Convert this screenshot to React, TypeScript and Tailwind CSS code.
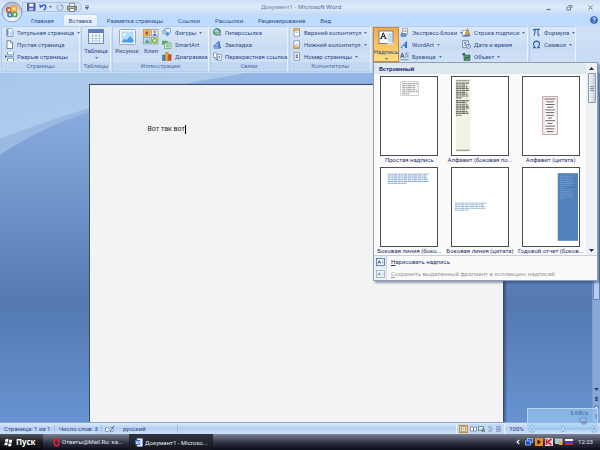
import type { ReactNode } from "react";

const pageText = "font-['Roboto','Noto_Sans',sans-serif] text-[6px] leading-[8px] whitespace-nowrap";

function Svg({ w = 9, h = 9, box, children }: { w?: number; h?: number; box?: string; children: ReactNode }) {
  return (
    <svg width={w} height={h} viewBox={box ?? `0 0 ${w} ${h}`} className="block shrink-0" aria-hidden="true">
      {children}
    </svg>
  );
}

function Caret() {
  return (
    <Svg w={3} h={2}>
      <path d="M0 0h3L1.500 2z" fill="#5a7098" />
    </Svg>
  );
}

/* ---------- ribbon icons ---------- */

const CoverPage = () => (
  <Svg>
    <path d="M2 .5h4l2 2v6H2z" fill="#fff" stroke="#5f82b4" strokeWidth=".7" />
    <path d="M1.500 1.500h2v6h-2z" fill="#5c93cf" />
    <path d="M4.500 4h2.500M4.500 5.500h2.500M4.500 7h2.500" stroke="#6aa3c8" strokeWidth=".6" />
  </Svg>
);
const BlankPage = () => (
  <Svg>
    <path d="M2 .7h3.500l2 2v5.800H2z" fill="#fff" stroke="#5b6d92" strokeWidth=".8" />
    <path d="M5.500.7v2h2" fill="#cfdcf0" stroke="#5b6d92" strokeWidth=".6" />
  </Svg>
);
const PageBreak = () => (
  <Svg>
    <path d="M2.500 0v2.800h6V0M2.500 9V6.200h6V9" fill="#fff" stroke="#667ba3" strokeWidth=".8" />
    <path d="M2.500 4.500h6.500" stroke="#42587f" strokeWidth=".8" strokeDasharray="1 .6" />
    <path d="M0 3l2 1.500L0 6z" fill="#2e4f86" />
  </Svg>
);
const Shapes = () => (
  <Svg w={10}>
    <rect x="2.500" y=".5" width="6" height="4.500" rx="1" fill="#e8f2fc" stroke="#5989c0" strokeWidth=".8" />
    <circle cx="2.500" cy="4" r="2" fill="#bcd8f2" stroke="#5989c0" strokeWidth=".7" />
    <path d="M5.500 4l2 2-2 2.500-2-2.500z" fill="#4f8dcc" />
  </Svg>
);
const SmartArt = () => (
  <Svg w={10}>
    <path d="M0 .8h5l1.500 2L5 4.800H0z" fill="#57a86a" />
    <rect x="2.500" y="3" width="6.500" height="5.500" fill="#d7efd5" stroke="#5a9e78" strokeWidth=".7" />
    <path d="M4 5h3.500M4 6.700h3.500" stroke="#4d9a63" strokeWidth=".8" />
  </Svg>
);
const Chart = () => (
  <Svg w={10}>
    <rect x=".5" y="3" width="2.600" height="5.700" fill="#3f7fc8" stroke="#2b5a98" strokeWidth=".4" />
    <rect x="3.500" y=".4" width="2.600" height="8.300" fill="#e9a22a" stroke="#b87310" strokeWidth=".4" />
    <rect x="6.500" y="2.600" width="2.600" height="6.100" fill="#d4492e" stroke="#9d2c17" strokeWidth=".4" />
  </Svg>
);
const Globe = () => (
  <Svg>
    <circle cx="4" cy="4" r="3.600" fill="#4f9b58" stroke="#2d6f62" strokeWidth=".6" />
    <path d="M1.500 2.500q2-2 4 0t-1 2-3 0z" fill="#a3d4ee" />
    <path d="M3.500 6.800h1.300M6 6.800h1.800" stroke="#fff" strokeWidth="2.600" strokeLinecap="round" />
    <path d="M3 6.800h2M6 6.800h2" stroke="#3d5f94" strokeWidth="1.200" strokeLinecap="round" />
  </Svg>
);
const Bookmark = () => (
  <Svg>
    <path d="M.5 6.500L6 1l1 6.500-2-1.500z" fill="#9cc2ea" stroke="#2f66b0" strokeWidth=".8" />
    <path d="M1 8h6.500M5 3l2.500 5" stroke="#2f5ea8" strokeWidth=".9" />
  </Svg>
);
const CrossRef = () => (
  <Svg>
    <path d="M.6 1h3.200v4.500H.6z" fill="#fff" stroke="#6b7d9f" strokeWidth=".7" />
    <path d="M4.500 2.500h3.800v5.800H4.500z" fill="#fff" stroke="#6b7d9f" strokeWidth=".7" />
    <path d="M2 6.500q.5 1.500 2.500 1M6.300 4v2.500" fill="none" stroke="#36507f" strokeWidth=".8" />
  </Svg>
);
function HeaderFooter({ kind }: { kind: "top" | "bottom" | "number" }) {
  return (
    <Svg>
      <path d="M2 .7h5.500v7.600H2z" fill="#fff" stroke="#7587aa" strokeWidth=".8" />
      {kind === "top" && <path d="M1.500.5h5v2.500h-5z" fill="#edb84d" stroke="#b38228" strokeWidth=".4" />}
      {kind === "bottom" && <path d="M1.500 6h5v2.500h-5z" fill="#edb84d" stroke="#b38228" strokeWidth=".4" />}
      {kind === "number" && <path d="M3.700 3.200h2M3.700 5.500h2M4.200 2.400v4M5.400 2.400v4" stroke="#31507f" strokeWidth=".6" />}
      {kind !== "number" && <path d="M3.500 4.500h2.800" stroke="#9aaac6" strokeWidth=".7" />}
    </Svg>
  );
}
const QuickParts = () => (
  <Svg>
    <path d="M2.500.5h5v6h-5z" fill="#f5f8fd" stroke="#7388ae" strokeWidth=".7" />
    <path d="M3.500 2h3v2h-3z" fill="#e3b057" />
    <path d="M1 5.500h5v3H1z" fill="#6e97cf" stroke="#46689d" strokeWidth=".5" />
  </Svg>
);
const WordArt = () => (
  <Svg>
    <path d="M.5 8L7 .8V8H5V6H3L1.800 8z" fill="#2c6fc4" />
    <path d="M4 5h1.200V3.700z" fill="#d5e6fa" />
  </Svg>
);
const DropCap = () => (
  <Svg>
    <path d="M.5 6l1.800-5 1.800 5M1.200 4.300h2.200" fill="none" stroke="#3d5078" strokeWidth=".9" />
    <path d="M5 1.200h3.500M5 3h3.500M5 4.800h3.500M.5 7.700h8" stroke="#5f7297" strokeWidth=".7" />
  </Svg>
);
const Signature = () => (
  <Svg>
    <path d="M.5 2.500h5.500v6H.5z" fill="#fff" stroke="#7186ab" strokeWidth=".6" />
    <path d="M3 6.500L5.500.7 7.700 6.500z" fill="#dfa33d" stroke="#94641b" strokeWidth=".5" />
    <path d="M1.200 7.700h7" stroke="#2e5aa6" strokeWidth="1" />
  </Svg>
);
const DateTime = () => (
  <Svg>
    <path d="M.7.7h5.600v7H.7z" fill="#fff" stroke="#49658f" strokeWidth=".8" />
    <path d="M4.500 2.300H2.600v1.400h1.600v1.800H2.300" fill="none" stroke="#2a4c86" strokeWidth=".7" />
    <circle cx="6.600" cy="6.300" r="2.100" fill="#dceafb" stroke="#49658f" strokeWidth=".6" />
    <path d="M6.600 5v1.400h1" fill="none" stroke="#2a4c86" strokeWidth=".5" />
  </Svg>
);
const ObjectIcon = () => (
  <Svg>
    <path d="M.5 1h2.500v2.500H.5z" fill="#3b6a48" />
    <path d="M2 3h6v5.500H2z" fill="#58a557" stroke="#27603e" strokeWidth=".6" />
    <path d="M3 7.500l1.500-2.500L6 6.500l1.500-3" fill="none" stroke="#173f8a" strokeWidth=".9" />
  </Svg>
);
const Pi = () => (
  <Svg>
    <path d="M1 2.500Q1.500 1.300 3 1.400h5M3.200 1.600q0 4-1.400 6M6 1.600v4.700q0 1.500 1.600 1" fill="none" stroke="#3263ab" strokeWidth="1.100" />
  </Svg>
);
const Omega = () => (
  <Svg>
    <path d="M1 7.600h2.300Q1.500 5.800 1.500 4 1.600 1.200 4.500 1.100 7.400 1.200 7.500 4q0 1.800-1.800 3.600H8" fill="none" stroke="#2a61b8" strokeWidth="1.100" />
  </Svg>
);

const TableBig = () => (
  <Svg w={16} h={16}>
    <rect x=".5" y=".5" width="15" height="14" fill="#fff" stroke="#6d89b8" />
    <path d="M1 1h14v3H1z" fill="#5a7cc0" />
    <path d="M1 7h14M1 9.500h14M1 12h14M4.500 4v10M8 4v10M11.500 4v10" stroke="#9fb2d4" strokeWidth=".7" />
  </Svg>
);
const PictureBig = () => (
  <Svg w={17} h={16}>
    <rect x=".5" y=".5" width="16" height="15" rx="1" fill="#f5f9fe" stroke="#91a7cc" />
    <rect x="2.500" y="2.500" width="12" height="11" fill="#b7dbfa" />
    <path d="M2.500 13.500l3-4 2 2 3.500-4.500 3.500 4v2.500z" fill="#4f9ce0" />
    <circle cx="5.500" cy="5.500" r="1.300" fill="#fff" />
  </Svg>
);
const ClipBig = () => (
  <Svg w={16} h={16}>
    <rect x=".5" y=".5" width="6.500" height="6.500" fill="#f2ba4e" stroke="#c18b31" strokeWidth=".7" />
    <rect x="8.500" y=".5" width="6.500" height="6.500" fill="#e9eef8" stroke="#7e93b9" strokeWidth=".7" />
    <rect x=".5" y="8.500" width="6.500" height="6.500" fill="#b7dcf5" stroke="#7e93b9" strokeWidth=".7" />
    <rect x="8.500" y="8.500" width="6.500" height="6.500" fill="#dff0c9" stroke="#7fa35f" strokeWidth=".7" />
    <path d="M2.500 2.500h2.500v3H2.500z" fill="#b44c24" />
    <circle cx="11.700" cy="2.700" r="1.300" fill="#d57a2a" />
    <path d="M9.800 6.500q2-4 4 0z" fill="#3c5fa4" />
    <path d="M1.500 14l2.500-4 2.500 4z" fill="#58a854" />
    <circle cx="11.700" cy="11.700" r="2" fill="none" stroke="#5f9e3e" strokeWidth="1.100" />
  </Svg>
);
const TextBoxBig = () => (
  <Svg w={17} h={16}>
    <rect x="1" y="1" width="14" height="12.500" fill="#fdfdfd" stroke="#6e7f9d" />
    <rect x="9.500" y="3" width="4.500" height="9" fill="#c9daf0" />
    <path d="M3 8.500L5.300 2.800l2.300 5.700M3.900 6.700h2.800M2.200 8.600h1.800M6.600 8.600h2" fill="none" stroke="#141414" strokeWidth="1" />
    <path d="M9 12.500h7V15H9z" fill="#dce8f8" opacity=".7" />
  </Svg>
);

/* ---------- ribbon pieces ---------- */

type Item = { label: string; icon: ReactNode; menu?: boolean };

function Rows({ items, className = "" }: { items: Item[]; className?: string }) {
  return (
    <div className={`flex flex-col gap-px ${className}`}>
      {items.map((it) => (
        <button key={it.label} type="button" className="flex h-[11px] items-center gap-[3px] text-left">
          {it.icon}
          <span>{it.label}</span>
          {it.menu && <Caret />}
        </button>
      ))}
    </div>
  );
}

function Big({ icon, label, menu, className = "" }: { icon: ReactNode; label: string; menu?: boolean; className?: string }) {
  return (
    <button type="button" className={`flex h-[35px] flex-col items-center pt-[2px] ${className}`}>
      {icon}
      <span className="mt-[2px]">{label}</span>
      {menu && (
        <span className="mt-[2px]">
          <Caret />
        </span>
      )}
    </button>
  );
}

function Group({ title, className = "", children }: { title: string; className?: string; children: ReactNode }) {
  return (
    <section
      className={`flex h-[46px] shrink-0 flex-col justify-between rounded-[2px] border border-[#b4cdec] border-r-[#eaf3fd] bg-linear-to-b from-[#dbe8f8] via-[#c9dcf3] to-[#d5e5f8] ${className}`}
    >
      <div className="flex">{children}</div>
      <h2 className="h-[9px] bg-[#c2d8f1] text-center text-[#4a6ea9]">{title}</h2>
    </section>
  );
}

/* ---------- gallery ---------- */

function Lines({ x, y, w, n, step, color, sw = 1 }: { x: number; y: number; w: number; n: number; step: number; color: string; sw?: number }) {
  return (
    <>
      {Array.from({ length: n }, (_, i) => (
        <path
          key={i}
          d={`M${x} ${y + i * step}h${i === n - 1 ? w * 0.45 : w - ((i * 7) % 4)}`}
          stroke={color}
          strokeWidth={sw}
          strokeDasharray="3 .5 2 .4 4 .6"
        />
      ))}
    </>
  );
}

const gallery: { label: string; art: ReactNode }[] = [
  {
    label: "Простая надпись",
    art: (
      <>
        <rect x="20.500" y="4.500" width="18" height="14" fill="#fff" stroke="#a5a5a5" strokeWidth=".6" />
        <Lines x={22} y={6.500} w={16} n={6} step={2.100} color="#777" sw={0.8} />
      </>
    ),
  },
  {
    label: "Алфавит (боковая по...",
    art: (
      <>
        <rect x="4" y="2" width="15" height="75" fill="#eff3e4" />
        <path d="M4 3.500h14M4 75.500h14" stroke="#96827a" strokeWidth="1.200" />
        <Lines x={4} y={6} w={14} n={9} step={1.900} color="#6b6b5f" sw={1.200} />
        <Lines x={4} y={24} w={14} n={9} step={1.900} color="#6b6b5f" sw={1.200} />
      </>
    ),
  },
  {
    label: "Алфавит (цитата)",
    art: (
      <>
        <rect x="20.500" y="20" width="15" height="39" fill="#fff" stroke="#b98a90" strokeWidth=".9" />
        <rect x="22" y="21.500" width="12" height="36" fill="#fff" stroke="#e3cfd1" strokeWidth=".5" />
        {[11, 8, 9, 7, 10, 9, 8, 4, 10, 5, 10, 9, 7].map((w, i) => (
          <path key={i} d={`M${28 - w / 2} ${22.5 + i * 2.8}h${w}`} stroke="#6b5a5c" />
        ))}
      </>
    ),
  },
  { label: "Боковая линия (боко...", art: <Lines x={7} y={6} w={43} n={6} step={1.900} color="#6f97c4" sw={0.9} /> },
  { label: "Боковая линия (цитата)", art: <Lines x={3} y={36} w={33} n={5} step={1.800} color="#85a6cc" sw={0.9} /> },
  {
    label: "Годовой отчет (боков...",
    art: (
      <>
        <rect x="36" y="5" width="21" height="70" fill="#4f81bd" />
        <Lines x={38} y={8} w={15} n={7} step={1.900} color="#83a5cf" sw={0.7} />
        <Lines x={38} y={22} w={15} n={6} step={1.900} color="#83a5cf" sw={0.7} />
      </>
    ),
  },
];

function MenuIcon() {
  return (
    <Svg w={9} h={8}>
      <rect x=".5" y=".5" width="8" height="7" fill="#eaf2fb" stroke="#5c7da8" strokeWidth=".9" />
      <path d="M2 5.500l1.300-3 1.300 3M2.500 4.500h1.600" fill="none" stroke="#2f4a78" strokeWidth=".8" />
      <path d="M6 2.500h1.500v3H6z" fill="#a9c4e4" />
    </Svg>
  );
}

function TextBoxMenu() {
  return (
    <div
      role="menu"
      className="absolute top-full left-0 z-10 flex w-[225px] flex-col border border-[#8f9fb8] bg-[#fafafa] text-[#1f3270] shadow-[2px_2px_2px_rgba(30,50,90,0.45)]"
    >
      <div className="flex">
        <div className="min-w-0 flex-1">
          <h3 className="h-[11px] bg-[#dde7ee] pl-[5px] leading-[11px] font-bold">Встроенный</h3>
          <div className="grid grid-cols-3 gap-y-[3px] pt-[2px]">
            {gallery.map((g) => (
              <button key={g.label} type="button" role="menuitem" className="flex flex-col items-center">
                <svg width="58" height="80" viewBox="0 0 58 80" className="block border border-[#4d4d4d] bg-white" aria-hidden="true">
                  {g.art}
                </svg>
                <span>{g.label}</span>
              </button>
            ))}
          </div>
        </div>
        <div className="flex w-[11px] flex-col items-center bg-[#eef0f4]">
          <button type="button" aria-label="Вверх" className="flex h-[10px] w-full items-center justify-center">
            <Svg w={5} h={3}>
              <path d="M0 3h5L2.500 0z" fill="#222c44" />
            </Svg>
          </button>
          <div className="flex h-[30px] w-[8px] items-center justify-center rounded-[1px] border border-[#8c99ae] bg-linear-to-r from-[#f0f3f8] to-[#c5cfde]">
            <Svg w={4} h={5}>
              <path d="M0 .5h4M0 2.500h4M0 4.500h4" stroke="#6c7b94" strokeWidth=".8" />
            </Svg>
          </div>
          <button type="button" aria-label="Вниз" className="mt-auto flex h-[10px] w-full items-center justify-center">
            <Svg w={5} h={3}>
              <path d="M0 0h5L2.500 3z" fill="#222c44" />
            </Svg>
          </button>
        </div>
      </div>
      <div className="border-t border-[#c8ced8]">
        {[
          { first: "Н", rest: "арисовать надпись", off: false },
          { first: "С", rest: "охранить выделенный фрагмент в коллекцию надписей", off: true },
        ].map((m) => (
          <button key={m.first} type="button" role="menuitem" disabled={m.off} className="flex h-[12px] w-full items-center text-left disabled:text-[#9a9a9a]">
            <span className={`flex h-full w-[13px] items-center justify-center border-r border-[#c5cdd8] bg-[#e6edf3] ${m.off ? "opacity-60" : ""}`}>
              <MenuIcon />
            </span>
            <span className="pl-[4px]">
              <u>{m.first}</u>
              {m.rest}
            </span>
          </button>
        ))}
      </div>
    </div>
  );
}

/* ---------- window chrome ---------- */

function OfficeOrb() {
  return (
    <button type="button" aria-label="Office" className="absolute top-[1px] left-[1px] z-10">
      <Svg w={22} h={22}>
        <defs>
          <radialGradient id="orb" cx=".5" cy=".75" r=".7">
            <stop offset="0" stopColor="#fdfeff" />
            <stop offset=".6" stopColor="#d6e0ec" />
            <stop offset="1" stopColor="#a8b8ce" />
          </radialGradient>
        </defs>
        <circle cx="11" cy="11" r="10" fill="url(#orb)" stroke="#8096b8" strokeWidth=".8" />
        <rect x="5.800" y="6.800" width="4.200" height="4.200" rx="1" fill="none" stroke="#d8502a" strokeWidth="1.700" />
        <rect x="10.500" y="5.300" width="5" height="5" rx="1" fill="#f8dd9c" stroke="#efa42c" strokeWidth="1.700" />
        <rect x="7" y="11.800" width="3.800" height="3.800" rx="1" fill="none" stroke="#3f7cc4" strokeWidth="1.700" />
        <rect x="11.800" y="11.500" width="4" height="4" rx="1" fill="none" stroke="#5ba545" strokeWidth="1.700" />
      </Svg>
    </button>
  );
}

function TitleBar() {
  return (
    <header className="flex h-[14px] shrink-0 items-center bg-linear-to-b from-[#cddff6] via-[#dfebfa] to-[#c8dcf6] pr-[6px]">
      <div className="ml-[22px] flex h-[10px] w-[60px] items-center gap-[3px] rounded-r-full border border-[#a9c3e6] bg-[#d3e3f7] pl-[4px]">
        <button type="button" aria-label="Сохранить">
          <Svg w={9} h={8}>
            <path d="M.5.5h7.500v7H.5z" fill="#5a6bc4" stroke="#313f92" strokeWidth=".8" />
            <path d="M2.300.7h4v2.800h-4z" fill="#fff" />
            <path d="M2.300 5.200h4v2.300h-4z" fill="#c9d3f1" />
          </Svg>
        </button>
        <button type="button" aria-label="Отменить" className="flex items-center gap-[2px]">
          <Svg w={8} h={8}>
            <path d="M2 3.500Q5.500.5 6.500 3T4.500 7.200" fill="none" stroke="#3566b8" strokeWidth="1.500" />
            <path d="M.3 1l.5 4 3.400-1.300z" fill="#3566b8" />
          </Svg>
          <Caret />
        </button>
        <button type="button" aria-label="Повторить" className="pl-px">
          <Svg w={8} h={8}>
            <path d="M2.300 1.700a3 3 0 1 0 3.800.3" fill="none" stroke="#9eafca" strokeWidth="1.200" />
            <path d="M4.500 0v3.500h3z" fill="#9eafca" />
          </Svg>
        </button>
        <button type="button" aria-label="Печать">
          <Svg w={10} h={9}>
            <path d="M2.500.5h5v3h-5z" fill="#fff" stroke="#656c72" strokeWidth=".7" />
            <path d="M.5 3.300h9v3.500h-9z" fill="#b9bfa9" stroke="#50574f" strokeWidth=".8" />
            <path d="M2.500 5.500h5v3h-5z" fill="#fff" stroke="#50574f" strokeWidth=".7" />
            <circle cx="8" cy="4.600" r=".7" fill="#47a33c" />
          </Svg>
        </button>
      </div>
      <button type="button" aria-label="Настройка панели" className="ml-[3px]">
        <Svg w={4} h={5}>
          <path d="M0 .5h4M0 2h4L2 4.500z" fill="#4b5f88" stroke="#4b5f88" strokeWidth=".5" />
        </Svg>
      </button>
      <h1 className="flex-1 pl-[172px] font-['Noto_Sans',sans-serif] text-[#6a7fa3]">
        Документ1 - <span className="text-[#4b6797]">Microsoft Word</span>
      </h1>
      <div className="flex items-center gap-[14px]">
        <button type="button" aria-label="Свернуть">
          <Svg w={7} h={7}>
            <path d="M1.500 5.500h4" stroke="#5c7298" strokeWidth="1.200" />
          </Svg>
        </button>
        <button type="button" aria-label="Восстановить">
          <Svg w={7} h={7}>
            <path d="M2.500 1.500h3.500v2.500M1 3h3.500v3H1z" fill="none" stroke="#5c7298" strokeWidth=".9" />
          </Svg>
        </button>
        <button type="button" aria-label="Закрыть">
          <Svg w={7} h={7}>
            <path d="M1.500 1.500l4 4M5.500 1.500l-4 4" stroke="#5c7298" strokeWidth="1" />
          </Svg>
        </button>
      </div>
    </header>
  );
}

const tabs = ["Главная", "Вставка", "Разметка страницы", "Ссылки", "Рассылки", "Рецензирование", "Вид"];

function Tabs() {
  return (
    <nav className="flex h-[12px] shrink-0 items-end gap-[5px] bg-[#bfdbff] pr-[2px] pl-[26px] text-[#2c4f8c]">
      {tabs.map((t) => (
        <button
          key={t}
          type="button"
          className={`h-[11px] rounded-t-[2px] px-[5px] leading-[11px] ${t === "Вставка" ? "bg-linear-to-b from-[#f4f8fe] to-[#dfeafa] shadow-[0_0_1px_#7f9dc8]" : ""}`}
        >
          {t}
        </button>
      ))}
      <button type="button" aria-label="Справка" className="mb-[2px] ml-auto">
        <Svg w={8} h={8}>
          <circle cx="4" cy="4" r="3.500" fill="#3c6dc2" stroke="#2a4f96" strokeWidth=".6" />
          <path d="M2.800 3q.1-1.200 1.300-1.200t1.200 1.100T4 4.400v.5M4 5.700v.8" fill="none" stroke="#fff" strokeWidth=".9" />
        </Svg>
      </button>
    </nav>
  );
}

function Ribbon() {
  return (
    <div className="flex h-[47px] shrink-0 gap-px bg-linear-to-b from-[#d0e1f6] to-[#c5daf3] pl-px text-[#2b4a86]">
      <Group title="Страницы" className="w-[79px]">
        <Rows
          className="pl-[3px]"
          items={[
            { label: "Титульная страница", icon: <CoverPage />, menu: true },
            { label: "Пустая страница", icon: <BlankPage /> },
            { label: "Разрыв страницы", icon: <PageBreak /> },
          ]}
        />
      </Group>
      <Group title="Таблицы" className="w-[30px]">
        <Big icon={<TableBig />} label="Таблица" menu className="w-full" />
      </Group>
      <Group title="Иллюстрации" className="w-[97px]">
        <Big icon={<PictureBig />} label="Рисунок" className="w-[28px]" />
        <Big icon={<ClipBig />} label="Клип" className="w-[20px]" />
        <Rows
          className="pl-px"
          items={[
            { label: "Фигуры", icon: <Shapes />, menu: true },
            { label: "SmartArt", icon: <SmartArt /> },
            { label: "Диаграмма", icon: <Chart /> },
          ]}
        />
      </Group>
      <Group title="Связи" className="w-[78px]">
        <Rows
          className="pl-[2px]"
          items={[
            { label: "Гиперссылка", icon: <Globe /> },
            { label: "Закладка", icon: <Bookmark /> },
            { label: "Перекрестная ссылка", icon: <CrossRef /> },
          ]}
        />
      </Group>
      <Group title="Колонтитулы" className="w-[82px]">
        <Rows
          className="pl-[2px]"
          items={[
            { label: "Верхний колонтитул", icon: <HeaderFooter kind="top" />, menu: true },
            { label: "Нижний колонтитул", icon: <HeaderFooter kind="bottom" />, menu: true },
            { label: "Номер страницы", icon: <HeaderFooter kind="number" />, menu: true },
          ]}
        />
      </Group>
      <Group title="Текст" className="w-[156px]">
        <div className="relative">
          <Big
            icon={<TextBoxBig />}
            label="Надпись"
            menu
            className="w-[26px] border border-[#c08a3c] bg-linear-to-b from-[#f4a94e] via-[#fbc163] to-[#ffe07e]"
          />
          <TextBoxMenu />
        </div>
        <Rows
          className="w-[62px] pl-px"
          items={[
            { label: "Экспресс-блоки", icon: <QuickParts />, menu: true },
            { label: "WordArt", icon: <WordArt />, menu: true },
            { label: "Буквица", icon: <DropCap />, menu: true },
          ]}
        />
        <Rows
          className="pl-px"
          items={[
            { label: "Строка подписи", icon: <Signature />, menu: true },
            { label: "Дата и время", icon: <DateTime /> },
            { label: "Объект", icon: <ObjectIcon />, menu: true },
          ]}
        />
      </Group>
      <Group title="Символы" className="w-[47px]">
        <Rows
          className="pl-[2px]"
          items={[
            { label: "Формула", icon: <Pi />, menu: true },
            { label: "Символ", icon: <Omega />, menu: true },
          ]}
        />
      </Group>
    </div>
  );
}

function Workspace() {
  return (
    <main className="relative flex min-h-0 flex-1 bg-linear-to-b from-[#94b6e6] via-[#5479b1] via-66% to-[#6893d1]">
      <svg className="absolute inset-0 h-full w-full" viewBox="0 0 600 350" preserveAspectRatio="none" aria-hidden="true">
        <defs>
          <linearGradient id="sky" x1="0" y1="0" x2="1" y2="1">
            <stop offset="0" stopColor="#a9c7ea" />
            <stop offset="1" stopColor="#b3cfee" />
          </linearGradient>
        </defs>
        <path d="M0 0h250Q170 12 89 39 38 56 0 82z" fill="#9bbae3" />
        <path d="M0 0h245Q165 12 89 35 40 50 0 66z" fill="url(#sky)" />
      </svg>
      <div className="relative flex min-w-0 flex-1 justify-center pt-[11px]">
        <article className="w-[415px] border border-b-0 border-[#3d4b68] bg-[#f3f3f3] pt-[40px] pl-[58px] text-[#262626] shadow-[2px_0_1px_rgba(30,50,90,0.4)]">
          <p className="inline-block border-r border-black text-[7px] leading-[9px]">Вот так вот</p>
        </article>
      </div>
      <div className="relative flex w-[8px] flex-col items-center border-l border-[#7e9cca] bg-[#87a7d8]">
        <div className="mt-[20px] h-[207px] w-[7px] rounded-[1px] border border-[#5f7fb2] bg-[#b6cdec]" />
        <div className="mt-auto flex flex-col items-center gap-[4px] pb-[3px]">
          {["Вниз", "Предыдущая страница", "Выбор объекта", "Следующая страница"].map((label, i) => (
            <button key={label} type="button" aria-label={label}>
              <Svg w={5} h={5}>
                {i === 0 && <path d="M0 1h5L2.500 4z" fill="#27457c" />}
                {i === 1 && <path d="M.5 2.500L2.500.5l2 2M.5 4.700l2-2 2 2" fill="#1b2f5a" />}
                {i === 2 && <circle cx="2.500" cy="2.500" r="1.800" fill="#dfeafa" stroke="#27457c" strokeWidth=".8" />}
                {i === 3 && <path d="M.5.5l2 2 2-2M.5 2.700l2 2 2-2" fill="#1b2f5a" />}
              </Svg>
            </button>
          ))}
        </div>
      </div>
    </main>
  );
}

function StatusBar() {
  return (
    <footer className="relative flex h-[12px] shrink-0 items-center border-t border-[#8ba6cd] bg-linear-to-b from-[#dbe9fb] via-[#b5cff0] to-[#cfe2fa] text-[#24427c]">
      <span className="w-[55px] border-r border-[#a3bfe5] pl-[4px]">Страница: 1 из 1</span>
      <span className="w-[47px] border-r border-[#a3bfe5] pl-[4px]">Число слов: 3</span>
      <button type="button" aria-label="Правописание" className="pl-[3px]">
        <Svg w={10} h={8}>
          <path d="M.5 3q2-1 4 .5Q6 2 8 2.500v4q-2-.5-3.500.5Q3 6 .5 6.500z" fill="#f4f8fe" stroke="#6981a8" strokeWidth=".8" />
          <path d="M4 4.500l1.300 1.500L9 .8" fill="none" stroke="#3d69ac" strokeWidth="1" />
        </Svg>
      </button>
      <span className="w-[63px] border-r border-[#a3bfe5] pl-[8px]">русский</span>
      <div className="ml-auto flex h-[10px] w-[49px] items-center justify-between border-x border-[#e9f2fd] bg-[#c5d9f3] px-[2px]">
        {["Разметка", "Чтение", "Веб", "Структура", "Черновик"].map((v, i) => (
          <button key={v} type="button" aria-label={v} className={i === 0 ? "border border-[#c98f33] bg-[#fbd287]" : ""}>
            <Svg w={7} h={6}>
              {i === 0 && <path d="M1.500.5h4v5h-4zM2.500 2h2M2.500 3.500h2" fill="#fff" stroke="#7d7a70" strokeWidth=".7" />}
              {i === 1 && <path d="M.5 1h3v4h-3zM3.500 1h3v4h-3z" fill="#fff" stroke="#677ea4" strokeWidth=".8" />}
              {i === 2 && <path d="M.5.5h5v4h-5zM4 3h2.500v2.500H4z" fill="#d7ecda" stroke="#52799a" strokeWidth=".8" />}
              {i === 3 && <path d="M1 1h4M2.500 3h4M1 5h4" stroke="#7a8eb0" strokeWidth=".9" />}
              {i === 4 && <path d="M1 .7h5M1 2.200h5M1 3.700h5M1 5.200h5" stroke="#7a8eb0" strokeWidth=".9" />}
            </Svg>
          </button>
        ))}
      </div>
      <button type="button" className="w-[23px] text-center">
        100%
      </button>
      <div className="flex w-[72px] items-center justify-between pr-[2px]">
        <button type="button" aria-label="Уменьшить">
          <Svg w={8} h={8}>
            <circle cx="4" cy="4" r="3.200" fill="#e4eefb" stroke="#7e99c4" strokeWidth=".8" />
            <path d="M2.300 4h3.400" stroke="#4a6799" />
          </Svg>
        </button>
        <input
          type="range"
          aria-label="Масштаб"
          defaultValue={50}
          className="h-px min-w-0 flex-1 appearance-none bg-[#8ba9d6] [&::-webkit-slider-thumb]:h-[6px] [&::-webkit-slider-thumb]:w-[4px] [&::-webkit-slider-thumb]:appearance-none [&::-webkit-slider-thumb]:rounded-b-[2px] [&::-webkit-slider-thumb]:border [&::-webkit-slider-thumb]:border-[#8299bf] [&::-webkit-slider-thumb]:bg-[#eaf2fd]"
        />
        <button type="button" aria-label="Увеличить">
          <Svg w={8} h={8}>
            <circle cx="4" cy="4" r="3.200" fill="#e4eefb" stroke="#7e99c4" strokeWidth=".8" />
            <path d="M2.300 4h3.400M4 2.300v3.400" stroke="#4a6799" />
          </Svg>
        </button>
      </div>
      {/* translucent network speed gadget floating over the corner */}
      <div className="pointer-events-none absolute right-[2px] bottom-[3px] flex h-[23px] w-[71px] flex-col items-end border border-[#b4d3ef] bg-[#9ccdf2]/60 pr-[9px] text-[#3f6492]">
        <span>5 KB/s</span>
        <Svg w={9} h={8}>
          <path d="M1 1h6v4H1zM3 5h4v2H3z" fill="#9fbede" stroke="#5f86b4" strokeWidth=".8" />
        </Svg>
      </div>
    </footer>
  );
}

function Taskbar() {
  return (
    <div className="flex h-[16px] shrink-0 items-center bg-linear-to-b from-[#7d8294] via-[#2f3242] via-55% to-[#0d0d1c] text-[#e6e8ee]">
      <button type="button" className="flex h-full w-[43px] items-center gap-[3px] bg-linear-to-b from-[#55585f] via-[#1a1b20] to-[#08080c] pl-[4px] font-['Noto_Sans',sans-serif] text-[8px] font-bold text-white">
        <Svg w={9} h={9}>
          <path d="M1.500 1.200q1.500-1 3 0L4 4Q2.500 3 1 4zM5.300 1.600q1.500.8 3 0L7.800 4.500q-1.500.8-3 0zM.8 4.800q1.500-1 3 0l-.5 2.800q-1.500-1-3 0zM4.600 5.200q1.500.8 3 0l-.5 2.800q-1.500.8-3 0z" fill="#fff" />
        </Svg>
        Пуск
      </button>
      <button type="button" className="flex h-full w-[86px] items-center gap-[2px] pl-[10px]">
        <Svg w={7} h={9}>
          <ellipse cx="3.500" cy="4.500" rx="2.400" ry="3.400" fill="none" stroke="#d2222c" strokeWidth="1.700" />
        </Svg>
        Ответы@Mail.Ru: ка...
      </button>
      <button type="button" className="flex h-full w-[84px] items-center gap-[2px] border-t border-[#2b2e3c] bg-linear-to-b from-[#30343f] to-[#12131c] pl-[6px]">
        <Svg w={8} h={9}>
          <path d="M2 .5h5.500v8H2z" fill="#f3f7fd" stroke="#7f9cce" strokeWidth=".6" />
          <path d="M.3 2h5v5h-5z" fill="#3e70c4" />
          <path d="M1 3l.8 3 .9-2.500L3.600 6l.9-3" fill="none" stroke="#fff" strokeWidth=".7" />
        </Svg>
        Документ1 - Microso...
      </button>
      <div className="ml-auto flex items-center gap-[2px] pr-[7px]">
        <button type="button" aria-label="Показать значки" className="pr-[3px]">
          <Svg w={4} h={6}>
            <path d="M3.300.8L1 3l2.300 2.200" fill="none" stroke="#fff" strokeWidth="1.100" />
          </Svg>
        </button>
        <Svg w={8} h={8}>
          <rect x="2.500" y=".5" width="5" height="4" fill="#2d5fd8" stroke="#b7cdf7" strokeWidth=".7" />
          <rect x=".5" y="3" width="5" height="4" fill="#1c49c0" stroke="#b7cdf7" strokeWidth=".7" />
        </Svg>
        <Svg w={8} h={8}>
          <rect width="8" height="8" fill="#f08a1c" />
          <path d="M2.500 1.500L6 4 2.500 6.500z" fill="#1a1a1a" />
        </Svg>
        <Svg w={8} h={8}>
          <rect width="8" height="8" fill="#e8d9dc" />
          <path d="M1.500 1v6M6.500 1l-4 3 4 3" fill="none" stroke="#c92230" strokeWidth="1.600" />
        </Svg>
        <Svg w={8} h={8}>
          <rect x=".5" y="1" width="6.500" height="4.500" fill="#9ec4e6" stroke="#dcdcc0" strokeWidth=".8" />
          <path d="M4 3h3.500v4H4z" fill="#e5a63a" />
        </Svg>
        <Svg w={8} h={8}>
          <rect y="1" width="8" height="2" fill="#f4f4f4" />
          <rect y="3" width="8" height="2" fill="#3440c8" />
          <rect y="5" width="8" height="2" fill="#c4263c" />
        </Svg>
        <time className="pl-[3px]">12:23</time>
      </div>
    </div>
  );
}

export default function App() {
  return (
    <div className={`relative flex h-screen flex-col overflow-hidden ${pageText}`}>
      <OfficeOrb />
      <TitleBar />
      <Tabs />
      <Ribbon />
      <Workspace />
      <StatusBar />
      <Taskbar />
    </div>
  );
}
